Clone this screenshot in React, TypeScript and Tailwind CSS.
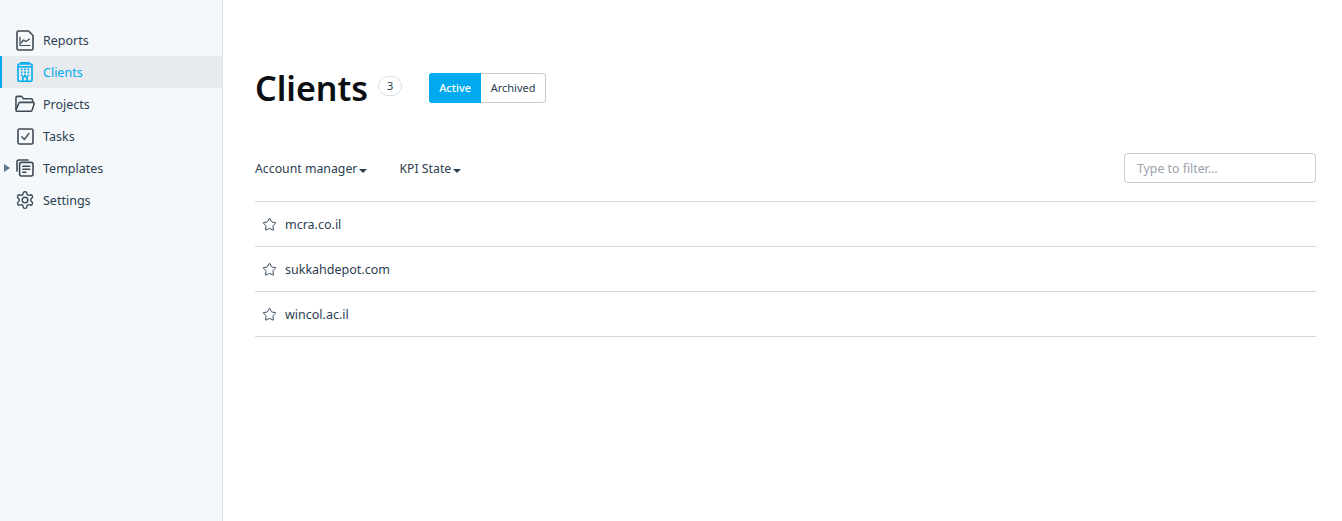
import { Star } from 'lucide-react'

const font = "font-['Noto_Sans',sans-serif]"

function ReportIcon() {
  return (
    <svg width="18" height="21" viewBox="0 0 18 21" fill="none" stroke="#3f4a55" strokeWidth="1.6" strokeLinejoin="round" strokeLinecap="round">
      <path d="M2.5 1h10L17 5.5V18.5a1.5 1.5 0 0 1-1.5 1.5H2.5A1.5 1.5 0 0 1 1 18.5v-16A1.5 1.5 0 0 1 2.5 1z" />
      <path d="M4 7v8.5h10" strokeWidth="1.2" />
      <path d="M5 13l2.5-3 2.5 1.6L13.5 9" strokeWidth="1.2" />
    </svg>
  )
}

function BuildingIcon() {
  return (
    <svg width="16" height="20" viewBox="0 0 16 20" fill="none" stroke="#00aaf0" strokeWidth="1.6">
      <rect x="1" y="2" width="14" height="17.2" rx="1" />
      <path d="M1 4.8h14" />
      <path d="M3.2.8h9.6" />
      <path d="M3.8 7.4h1.8M7.1 7.4h1.8M10.4 7.4h1.8M3.8 10.4h1.8M7.1 10.4h1.8M10.4 10.4h1.8M3.8 13.4h1.8M7.1 13.4h1.8M10.4 13.4h1.8" strokeWidth="1.7" />
      <path d="M5.8 19v-2.4a2.2 2.2 0 0 1 4.4 0V19" />
    </svg>
  )
}

function FolderIcon() {
  return (
    <svg width="21" height="18" viewBox="0 0 21 18" fill="none" stroke="#3f4a55" strokeWidth="1.6" strokeLinejoin="round">
      <path d="M1 15V2.5A1.5 1.5 0 0 1 2.5 1h4.3l2 2.4h8.1a1.5 1.5 0 0 1 1.5 1.5v2" />
      <path d="M1 15.2 4 8.3A1.6 1.6 0 0 1 5.5 7.3H19a1.2 1.2 0 0 1 1.1 1.6l-2.2 6.7a1.6 1.6 0 0 1-1.5 1.1H2.5A1.5 1.5 0 0 1 1 15.2z" />
    </svg>
  )
}

function TaskIcon() {
  return (
    <svg width="17" height="17" viewBox="0 0 17 17" fill="none" stroke="#3f4a55" strokeWidth="1.6" strokeLinecap="round" strokeLinejoin="round">
      <rect x="1" y="1" width="15" height="15" rx="1.5" />
      <path d="M4.8 8.8l2.5 2.7 4.6-6" strokeWidth="1.3" />
    </svg>
  )
}

function TemplateIcon() {
  return (
    <svg width="18" height="18" viewBox="0 0 18 18" fill="none" stroke="#3f4a55" strokeWidth="1.6" strokeLinecap="round" strokeLinejoin="round">
      <path d="M1 12V3a2 2 0 0 1 2-2h9" />
      <rect x="3.6" y="3.4" width="13.4" height="13.6" rx="2" />
      <path d="M6.8 7.2h7M6.8 10.2h7M6.8 13.2h3.2" strokeWidth="1.4" />
    </svg>
  )
}

function GearIcon() {
  return (
    <svg width="20" height="20" viewBox="0 0 24 24" fill="none" stroke="#3f4a55" strokeWidth="1.7" strokeLinecap="round" strokeLinejoin="round">
      <path d="M12.22 2h-.44a2 2 0 0 0-2 2v.18a2 2 0 0 1-1 1.73l-.43.25a2 2 0 0 1-2 0l-.15-.08a2 2 0 0 0-2.73.73l-.22.38a2 2 0 0 0 .73 2.73l.15.1a2 2 0 0 1 1 1.72v.51a2 2 0 0 1-1 1.74l-.15.09a2 2 0 0 0-.73 2.73l.22.38a2 2 0 0 0 2.73.73l.15-.08a2 2 0 0 1 2 0l.43.25a2 2 0 0 1 1 1.73V20a2 2 0 0 0 2 2h.44a2 2 0 0 0 2-2v-.18a2 2 0 0 1 1-1.73l.43-.25a2 2 0 0 1 2 0l.15.08a2 2 0 0 0 2.73-.73l.22-.39a2 2 0 0 0-.73-2.73l-.15-.08a2 2 0 0 1-1-1.74v-.5a2 2 0 0 1 1-1.74l.15-.09a2 2 0 0 0 .73-2.73l-.22-.38a2 2 0 0 0-2.73-.73l-.15.08a2 2 0 0 1-2 0l-.43-.25a2 2 0 0 1-1-1.73V4a2 2 0 0 0-2-2z" />
      <circle cx="12" cy="12" r="3.4" />
    </svg>
  )
}

function NavItem({ icon, label, active, caret }: { icon: React.ReactNode; label: string; active?: boolean; caret?: boolean }) {
  return (
    <div className={`relative flex h-8 items-center pl-[15px] ${active ? 'bg-[#e7ebee] text-[#00aaf0]' : 'text-[#2c3e50]'}`}>
      {active && <span className="absolute inset-y-0 left-0 w-0.5 bg-[#00aaf0]" />}
      {caret && <span className="absolute left-[4px] top-[12px] h-0 w-0 border-y-[4px] border-l-[6px] border-y-transparent border-l-[#5d7489]" />}
      <span className="flex w-5 justify-center">{icon}</span>
      <span className="ml-[8px] pt-[2px] text-[12.5px]">{label}</span>
    </div>
  )
}

function Caret() {
  return <span className="ml-[2px] mt-[2px] inline-block h-0 w-0 border-x-[4px] border-t-[4px] border-x-transparent border-t-[#2c3e50]" />
}

export default function App() {
  const clients = ['mcra.co.il', 'sukkahdepot.com', 'wincol.ac.il']

  return (
    <div className={`flex h-[521px] w-[1342px] overflow-hidden bg-white ${font}`}>
      {/* sidebar */}
      <div className="w-[223px] shrink-0 border-r border-[#dfe3e8] bg-[#f4f8fb] pt-6">
        <NavItem icon={<ReportIcon />} label="Reports" />
        <NavItem icon={<BuildingIcon />} label="Clients" active />
        <NavItem icon={<FolderIcon />} label="Projects" />
        <NavItem icon={<TaskIcon />} label="Tasks" />
        <NavItem icon={<TemplateIcon />} label="Templates" caret />
        <NavItem icon={<GearIcon />} label="Settings" />
      </div>

      {/* content */}
      <div className="flex-1 pl-8 pr-[26px] pt-[65px]">
        <div className="flex h-[46px] items-center">
          <h1 className="text-[34px] font-semibold leading-none text-[#0b0f14]">Clients</h1>
          <span className="ml-[10px] mt-[-4px] flex h-5 w-6 items-center justify-center rounded-full border border-[#d8dee4] text-[11px] text-[#2c3e50]">3</span>
          <div className="ml-[27px] mt-[-1px] flex h-[30px] text-[11px]">
            <span className="flex w-[52px] items-center justify-center rounded-l-[3px] bg-[#00aaf0] pt-px font-medium text-white">Active</span>
            <span className="flex w-[65px] items-center justify-center rounded-r-[3px] border border-l-0 border-[#ccc] pt-px text-[#2c3e50]">Archived</span>
          </div>
        </div>

        <div className="mt-[29px] flex h-[56px] items-center pb-[1px] text-[12.3px] text-[#2c3e50]">
          <span className="flex items-center pt-1">Account manager<Caret /></span>
          <span className="ml-8 flex items-center pt-1">KPI State<Caret /></span>
          <input
            placeholder="Type to filter..."
            className="ml-auto h-[30px] w-[192px] rounded-[4px] border border-[#ccc] px-3 pt-px text-[12.3px] outline-none placeholder:text-[#9aa3ac]"
          />
        </div>

        <div className="mt-[5px] border-t border-[#d5dae0]">
          {clients.map((name) => (
            <div key={name} className="flex h-[45px] items-center border-b border-[#d5dae0] pl-[7px] text-[12.5px] text-[#2c3e50]">
              <Star size={15} strokeWidth={1.5} className="text-[#2c3e50]" />
              <span className="ml-2 pt-[2px]">{name}</span>
            </div>
          ))}
        </div>
      </div>
    </div>
  )
}
